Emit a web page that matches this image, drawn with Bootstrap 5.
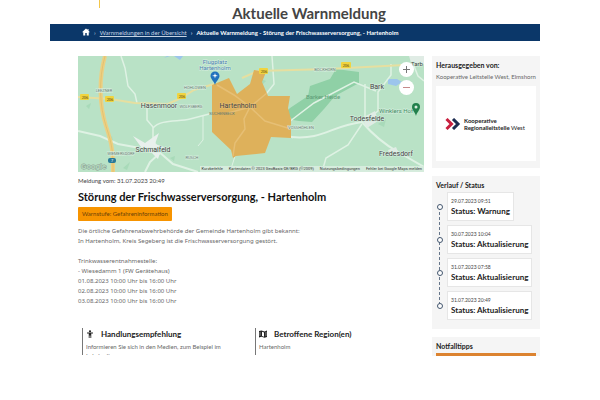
<!DOCTYPE html>
<html lang="de">
<head>
<meta charset="utf-8">
<meta name="viewport" content="width=device-width, initial-scale=1">
<title>Aktuelle Warnmeldung</title>
<link href="https://cdn.jsdelivr.net/npm/bootstrap@5.3.0/dist/css/bootstrap.min.css" rel="stylesheet">
<style>
body{font-family:Lato,"Noto Sans",sans-serif;font-size:7px;line-height:10px;color:#686868;background:#fff}
.page{padding-left:50px;padding-right:60px}
.masthead{height:24px;padding-left:28px}
.masthead::before{content:"";position:absolute;left:49px;top:0;width:1px;height:8px;background:#f3c64a}
.masthead h1{font-size:15px;line-height:24px;color:#444;padding-top:1px}
.crumbs{background:#0b3769;padding:0 32px;min-height:17px}
.crumbs .breadcrumb{--bs-breadcrumb-divider-color:#c8d4e4;--bs-breadcrumb-item-active-color:#fff;--bs-breadcrumb-item-padding-x:4px;--bs-breadcrumb-font-size:6px;line-height:17px}
.crumbs a{color:#c5d2e2}
.crumbs svg{width:8px;height:8px;display:block;margin-top:4px}
.content{padding:15px 0 0 28px;gap:8px}
.article{flex:346 1 0;min-width:0}
.aside-col{flex:108 1 0;min-width:0}
.map svg.chart{width:100%;display:block}
.chart text{font-family:Roboto,sans-serif;fill:#444;font-size:7px;stroke:#d8efe0;stroke-width:1px;paint-order:stroke}
.chart .minor{font-size:4px;fill:#667a70}
.chart .airfield{font-size:6px;fill:#4b7fae}
.chart .shield{font-size:4px;fill:#554a10;stroke:none}
.zoom{right:10px;top:6px;gap:3px}
.zoom .btn{width:15px;height:15px;padding:0;border:0;background:#fff;color:#666;display:flex;align-items:center;justify-content:center}
.zoom svg{width:9px;height:9px}
.legal{right:0;bottom:0;gap:6px;padding:0 2px;font:4px/6px Roboto,sans-serif;color:#333;background:#d6ecdd}
.legal a{color:#333}
.stamp{font-size:6px;line-height:10px;color:#444;margin:4px 0}
.headline{font-size:11px;line-height:14px;color:#111;margin-bottom:3px}
.level{background:#f79400;color:#6a4108;font-size:6px;line-height:14px;padding:0 4px;border-radius:1px;font-weight:400;margin-bottom:5px}
.report{font-family:"Noto Sans",sans-serif;font-size:6px;line-height:10px}
.facts{margin:22px 0 0}
.fact{border-left:1px solid #777;padding-left:3px;margin-left:4px;min-height:27px}
.fact h3{font-size:8px;line-height:12px;color:#222;gap:7px;margin-bottom:2px}
.fact h3 svg{width:8px;height:8px}
.fact p{font-size:6px;line-height:9px;max-width:142px}
.clip{height:13px;overflow:hidden}
.panel{background:#f5f5f5;padding:4px 4px 7px;margin-bottom:8px}
.panel h2{font-size:7px;line-height:10px;color:#222}
.panel .issuer{font-size:6px;line-height:10px;margin-top:2px}
.logo{background:#fff;height:75px;margin-top:4px;padding:0 9px;gap:3px;font-size:6px;line-height:7px;color:#222}
.logo svg{width:16px;height:12px;flex:none}
.panel-status{padding-bottom:9px}
.timeline{padding-left:11px;margin-top:2px;display:grid;gap:4px;justify-items:start}
.timeline::before{content:"";position:absolute;left:3px;top:15px;bottom:15px;border-left:1px dashed #66768a}
.timeline li{background:#fff;border:1px solid #e6e6e6;padding:3px;height:29px;white-space:nowrap}
.timeline li::before{content:"";position:absolute;left:-11px;top:11px;width:6px;height:6px;border:1px solid #44576f;border-radius:50%;background:#fff}
.timeline time{display:block;font-size:5px;line-height:10px;color:#444}
.timeline strong{display:block;font-size:8px;line-height:11px;color:#222}
.panel-tips{padding-bottom:0}
.tipbar{height:3px;background:#dc8330;margin-top:2px}
</style>
</head>
<body>
<div class="page">
<header class="masthead text-center position-relative"><h1 class="fw-bold mb-0">Aktuelle Warnmeldung</h1></header>
<nav class="crumbs" aria-label="Brotkrumen">
<ol class="breadcrumb mb-0" style="--bs-breadcrumb-divider:'›'">
<li class="breadcrumb-item"><a href="#" aria-label="Startseite"><svg viewBox="0 0 16 16" fill="#fff"><path d="M8 1 0 8.500h2.500V15H6.500V10h3v5h4V8.500H16L13 5.700V2H11v1.800z"/></svg></a></li>
<li class="breadcrumb-item"><a href="#">Warnmeldungen in der Übersicht</a></li>
<li class="breadcrumb-item active fw-bold" aria-current="page">Aktuelle Warnmeldung - Störung der Frischwasserversorgung, - Hartenholm</li>
</ol>
</nav>
<div class="content d-flex align-items-start">
<main class="article">
<div class="map position-relative">
<svg class="chart" viewBox="0 0 346 116" role="img" aria-label="Karte von Hartenholm">
<rect width="346" height="116" fill="#b9e2c6"/>
<g fill="#8fd0a6">
<path d="M232 30 252 23 258 13 281 16V27L257 40 246 53 234 66 221 65 209 63 198 66 212 52 230 40z"/>
<path d="M8 50l5-3-2 6zM45 112l7-6-3 8zM92 102l5-2-1 5zM178 21l6 8 4-4zM300 68l8-5-2 8zM30 85l4-5 1 7z" opacity=".4"/>
</g>
<g fill="#9cc5ec"><path d="M96 0h9l-3 4zM310 23h9l5 3-6 4-8-2zM86 2l3-2h3z"/></g>
<g fill="none" stroke="#dff2e4" stroke-width="1.500">
<path d="M43 0 47 12 50 30 57 38 59 47"/><path d="M69 51V64L75 71V84L81 94"/><path d="M75 72C82 63 101 66 112 63L135 57 147 53"/>
<path d="M0 75 22 80 40 88 62 92 80 95 95 108 120 116" stroke-width="2"/><path d="M82 97 72 106 67 116" stroke-width="2"/>
<path d="M194 0 196 28 185 42 172 51" /><path d="M125 60V84L120 90M158 97l-6 19" stroke-width="1"/>
<path d="M213 81C246 84 252 70 284 66C296 80 306 88 320 96L346 111" stroke-width="2"/>
<path d="M287 65 300 55V36L313 19V8M298 35l-22-9-40 21-29 22M284 68 270 89 248 102 244 116M287 28v36"/><path d="M334 5 340 20 346 25M213 62l-10 10 12 10" />
</g>
<path d="M0 41 32 43 57 47 90 48 103 42 116 34 136 28M164 22 180 15 250 13 345 8" fill="none" stroke="#e6dfa0" stroke-width="2"/>
<path d="M27 0C20 25 22 51 28 70C35 91 35 98 35 116" fill="none" stroke="#ecd083" stroke-width="4"/>
<path d="M27 0C20 25 22 51 28 70C35 91 35 98 35 116" fill="none" stroke="#dcb967" stroke-width=".6"/>
<path d="M55 80 67 87 81 77 77 88 86 91 82 97 80 103 74 97 66 95z" fill="#e9f0ed"/>
<path d="M284 62 297 55 300 65 289 72zM310 94 318 91 321 98 312 100zM331 0h15v8l-12 2z" fill="#e0ece5"/>
<path d="M134 62V29L151 22 159 38 172 28 176 14 188 16 184 26 190 40H212L210 52 213 63 213 82 193 81 187 97 158 100 155 102 153 94 134 76z" fill="#deb15b"/>
<path d="M139 29 156 39 172 51 166 63 167 73 157 87 155 100M172 51 189 37M172 51 187 65 213 73M176 50 150 57" fill="none" stroke="#e6bf75" stroke-width="1.500"/>
<g fill="#f0d43f"><rect x="2" y="38" width="9" height="6" rx="1"/><rect x="27" y="40" width="9" height="6" rx="1"/><rect x="99" y="37" width="9" height="6" rx="1"/><rect x="181" y="12" width="9" height="6" rx="1"/><rect x="263" y="6" width="10" height="6" rx="1"/></g>
<g text-anchor="middle"><text class="shield" x="7" y="43">206</text><text class="shield" x="32" y="45">206</text><text class="shield" x="104" y="42">206</text><text class="shield" x="186" y="17">206</text><text class="shield" x="268" y="11">206</text>
<rect x="30" y="102" width="8" height="5" rx="2" fill="#287a99"/><text class="shield" style="fill:#fff" x="34" y="106">7</text>
<text x="81" y="52">Hasenmoor</text><text x="75" y="96">Schmalfeld</text><text x="160" y="52" style="stroke:#e5be76">Hartenholm</text>
<text x="299" y="33">Bark</text><text x="289" y="65">Todesfelde</text><text x="318" y="100">Fredesdorf</text>
<text class="airfield" x="137" y="8">Flugplatz</text><text class="airfield" x="137" y="14">Hartenholm</text>
<text x="245" y="43" style="fill:#5d9b76;stroke:none;font-size:6px">Barker Heide</text><text x="318" y="57" style="fill:#3b8a5f;font-size:6px">Winklers Hof</text>
<text class="minor" x="26" y="36">LEEZNER</text><text class="minor" x="117" y="33">HOHLOWEN</text><text class="minor" x="113" y="52">WOLFSBERG</text><text class="minor" x="144" y="59" style="stroke:none">BUCHENBECK</text><text class="minor" x="43" y="99">WIEMERSDORF</text><text class="minor" x="114" y="103">RUSCH</text><text class="minor" x="247" y="15">BOCKHORN</text><text class="minor" x="223" y="73">VOSSHÖHLEN</text></g>
<text x="333" y="10" style="font-size:6px">Tarb</text>
<path d="M137 27C136 23 132.500 21 132.500 18A4.500 4.500 0 0 1 141.500 18C141.500 21 138 23 137 27z" fill="#2172bd" transform="translate(0 2)"/><path d="M137 17l.6 2 2.400 1-2.400.3-.6 2.200-.6-2.200-2.400-.3 2.400-1z" fill="#fff"/>
<path d="M338 60C337 56 334 54 334 51A4 4 0 0 1 342 51C342 54 339 56 338 60z" fill="#22804c"/><circle cx="338" cy="51" r="1.500" fill="#d6ecdd"/>
<text x="3" y="113" style="font-size:8px;fill:#b9e2c6;stroke:#8d9c93;font-weight:500">Google</text>
</svg>
<div class="zoom position-absolute d-flex flex-column">
<button type="button" class="btn rounded-circle" aria-label="Vergrößern"><svg viewBox="0 0 9 9" stroke="#777"><path d="M1 4.500h7M4.500 1v7"/></svg></button>
<button type="button" class="btn rounded-circle" aria-label="Verkleinern"><svg viewBox="0 0 9 9" stroke="#c68a8a"><path d="M1 4.500h7"/></svg></button>
</div>
<div class="legal position-absolute d-flex text-nowrap"><span>Kurzbefehle</span><span>Kartendaten © 2023 GeoBasis-DE/BKG (©2009)</span><a href="#" class="text-decoration-none">Nutzungsbedingungen</a><a href="#" class="text-decoration-none">Fehler bei Google Maps melden</a></div>
</div>
<p class="stamp">Meldung vom: 31.07.2023 20:49</p>
<h2 class="headline fw-bold">Störung der Frischwasserversorgung, - Hartenholm</h2>
<span class="level d-table">Warnstufe: Gefahreninformation</span>
<p class="report mb-0">Die örtliche Gefahrenabwehrbehörde der Gemeinde Hartenholm gibt bekannt:<br>In Hartenholm, Kreis Segeberg ist die Frischwasserversorgung gestört.<br><br>Trinkwasserentnahmestelle:<br>- Wiesedamm 1 (FW Gerätehaus)<br>01.08.2023 10:00 Uhr bis 16:00 Uhr<br>02.08.2023 10:00 Uhr bis 16:00 Uhr<br>03.08.2023 10:00 Uhr bis 16:00 Uhr</p>
<div class="facts row g-0">
<div class="col-6"><section class="fact"><h3 class="fw-bold d-flex align-items-center"><svg viewBox="0 0 16 16" fill="#222"><circle cx="8" cy="2.500" r="2.200"/><path d="M2 5h12v2H10.500V16H8.800V11H7.200V16H5.500V7H2z"/></svg>Handlungsempfehlung</h3><p class="clip mb-0">Informieren Sie sich in den Medien, zum Beispiel im Lokalradio.</p></section></div>
<div class="col-6"><section class="fact"><h3 class="fw-bold d-flex align-items-center"><svg viewBox="0 0 16 16" fill="#222"><path fill-rule="evenodd" d="M0 2 5 1 11 3 16 1V14L11 15.500 5 13.500 0 15zM6 3.500V12L10 13.300V4.800zM1.500 4v8l1-.3V3.700zM13.500 4v8.500l1-.5V3.700z"/></svg>Betroffene Region(en)</h3><p class="mb-0">Hartenholm</p></section></div>
</div>
</main>
<aside class="aside-col">
<section class="panel"><h2 class="fw-bold mb-0">Herausgegeben von:</h2><p class="issuer mb-0 text-nowrap">Kooperative Leitstelle West, Elmshorn</p>
<div class="logo d-flex align-items-center text-nowrap"><svg viewBox="0 0 16 12" fill="none" stroke-width="3"><path d="M8 1l5 5-5 5" stroke="#1d2c50"/><path d="M1.500 1l5 5-5 5" stroke="#c8203f"/></svg><div><b>Kooperative<br>Regionalleitstelle</b> West</div></div></section>
<section class="panel panel-status"><h2 class="fw-bold mb-0">Verlauf / Status</h2>
<ol class="timeline list-unstyled position-relative mb-0">
<li class="position-relative"><time datetime="2023-07-29T09:51">29.07.2023 09:51</time><strong>Status: Warnung</strong></li>
<li class="position-relative"><time datetime="2023-07-30T10:04">30.07.2023 10:04</time><strong>Status: Aktualisierung</strong></li>
<li class="position-relative"><time datetime="2023-07-31T07:58">31.07.2023 07:58</time><strong>Status: Aktualisierung</strong></li>
<li class="position-relative"><time datetime="2023-07-31T20:49">31.07.2023 20:49</time><strong>Status: Aktualisierung</strong></li>
</ol></section>
<section class="panel panel-tips mb-0"><h2 class="fw-bold mb-0">Notfalltipps</h2><div class="tipbar"></div></section>
</aside>
</div>
</div>
<script src="https://cdn.jsdelivr.net/npm/bootstrap@5.3.0/dist/js/bootstrap.bundle.min.js"></script>
</body>
</html>
